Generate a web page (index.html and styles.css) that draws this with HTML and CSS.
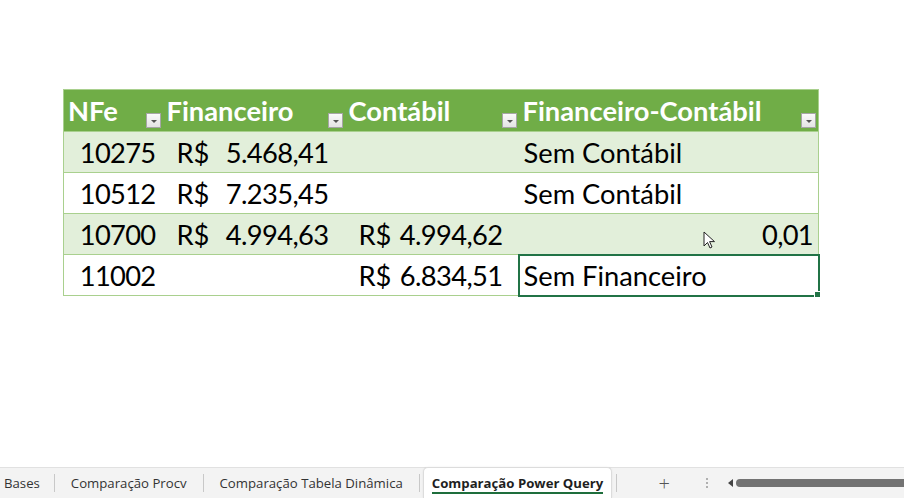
FILE: index.html
```html
<!DOCTYPE html>
<html lang="pt-BR">
<head>
<meta charset="utf-8">
<title>Comparação Power Query</title>
<link rel="stylesheet" href="styles.css">
</head>
<body>
<div class="sheet">
  <table class="xl-table">
    <colgroup>
      <col class="c-nfe">
      <col class="c-fin">
      <col class="c-cont">
      <col class="c-diff">
    </colgroup>
    <thead>
      <tr>
        <th><div class="hcell"><span>NFe</span><span class="filter"></span></div></th>
        <th><div class="hcell"><span>Financeiro</span><span class="filter"></span></div></th>
        <th><div class="hcell"><span>Contábil</span><span class="filter"></span></div></th>
        <th><div class="hcell"><span>Financeiro-Contábil</span><span class="filter"></span></div></th>
      </tr>
    </thead>
    <tbody>
      <tr class="band">
        <td class="num">10275</td>
        <td><div class="acc"><span>R$</span><span class="amt">5.468,41</span></div></td>
        <td></td>
        <td class="txt">Sem Contábil</td>
      </tr>
      <tr>
        <td class="num">10512</td>
        <td><div class="acc"><span>R$</span><span class="amt">7.235,45</span></div></td>
        <td></td>
        <td class="txt">Sem Contábil</td>
      </tr>
      <tr class="band">
        <td class="num">10700</td>
        <td><div class="acc"><span>R$</span><span class="amt">4.994,63</span></div></td>
        <td><div class="acc"><span>R$</span><span class="amt">4.994,62</span></div></td>
        <td class="num diff">0,01</td>
      </tr>
      <tr>
        <td class="num">11002</td>
        <td></td>
        <td><div class="acc"><span>R$</span><span class="amt">6.834,51</span></div></td>
        <td class="txt selected">Sem Financeiro</td>
      </tr>
    </tbody>
  </table>
  <svg class="cursor" width="13" height="19" viewBox="0 0 13 19">
    <path d="M1 1 L1 15 L4.5 11.5 L7 17 L9 16 L6.6 10.6 L11.5 10.6 Z" fill="#fff" stroke="#222" stroke-width="1"/>
  </svg>
</div>
<div class="tabbar">
  <div class="tab">Bases</div>
  <div class="sep"></div>
  <div class="tab">Comparação Procv</div>
  <div class="sep"></div>
  <div class="tab">Comparação Tabela Dinâmica</div>
  <div class="sep"></div>
  <div class="tab active"><span class="label">Comparação Power Query</span></div>
  <div class="sep"></div>
  <div class="add">+</div>
  <div class="dots"><span></span><span></span><span></span></div>
  <div class="scroll">
    <span class="arrow"></span>
    <span class="thumb"></span>
  </div>
</div>
</body>
</html>
```
FILE: styles.css
```css
html, body {
  margin: 0;
  padding: 0;
}
body {
  width: 904px;
  height: 498px;
  display: flex;
  flex-direction: column;
  background: #ffffff;
  overflow: hidden;
  font-family: Lato, "Liberation Sans", sans-serif;
}
.sheet {
  flex: 1;
  position: relative;
  padding: 89px 0 0 63px;
}
.xl-table {
  border-collapse: collapse;
  table-layout: fixed;
  width: 755px;
  border: 1px solid #a9d08e;
  font-size: 27.3px;
  color: #000;
}
.c-nfe { width: 99px; }
.c-fin { width: 182px; }
.c-cont { width: 174px; }
.c-diff { width: 300px; }
.xl-table th {
  background: #70ad47;
  color: #ffffff;
  font-weight: 700;
  height: 41px;
  padding: 0;
  text-align: left;
}
.hcell {
  display: flex;
  justify-content: space-between;
  align-items: center;
  height: 41px;
  padding: 0 2px 0 4px;
  box-sizing: border-box;
  position: relative;
}
.filter {
  align-self: flex-end;
  margin-bottom: 3px;
  width: 13px;
  height: 13px;
  border: 1px solid #a6a6a6;
  background: linear-gradient(#fafafa, #e4e4e4);
  position: relative;
  flex: none;
}
.filter::after {
  content: "";
  position: absolute;
  left: 4px;
  top: 6px;
  border-left: 3px solid transparent;
  border-right: 3px solid transparent;
  border-top: 3px solid #555;
}
.xl-table td {
  height: 40px;
  padding: 0;
  border-top: 1px solid #a9d08e;
  white-space: nowrap;
}
.band td {
  background: #e2efda;
}
.num {
  text-align: right;
  padding-right: 7px !important;
  letter-spacing: -0.7px;
}
.diff {
  padding-right: 5px !important;
}
.txt {
  padding-left: 5px !important;
}
.acc {
  display: flex;
  justify-content: space-between;
  padding: 0 16px 0 14px;
}
.amt {
  letter-spacing: -0.6px;
}
.selected {
  outline: 2px solid #217346;
  outline-offset: -1px;
  position: relative;
}
.selected::after {
  content: "";
  position: absolute;
  right: -3px;
  bottom: -3px;
  width: 5px;
  height: 5px;
  background: #217346;
  border: 1px solid #fff;
}
.cursor {
  position: absolute;
  left: 703px;
  top: 231px;
}
.tabbar {
  height: 30px;
  background: #f3f3f3;
  border-top: 1px solid #e1e1e1;
  display: flex;
  align-items: center;
  font-family: "Open Sans", "Noto Sans", sans-serif;
  font-size: 13.2px;
  color: #333;
  position: relative;
}
.tab {
  padding: 0 16px;
  white-space: nowrap;
}
.tab:first-child {
  padding-left: 4px;
  padding-right: 14px;
}
.sep {
  width: 1px;
  height: 18px;
  background: #c8c8c8;
}
.tab.active {
  align-self: stretch;
  background: #ffffff;
  margin-top: -1px;
  border: 1px solid #dcdcdc;
  border-bottom: none;
  border-radius: 5px 5px 0 0;
  box-shadow: 0 0 2px rgba(0,0,0,0.08);
  display: flex;
  align-items: center;
  padding: 0 8px;
  margin-left: 3px;
  margin-right: 4px;
  font-weight: 700;
  color: #1f1f1f;
}
.tab.active .label {
  border-bottom: 2px solid #1e6e3c;
  line-height: 18px;
  padding-top: 2px;
}
.add {
  margin-left: 39px;
  font-size: 20px;
  font-weight: 300;
  color: #555;
  width: 16px;
  text-align: center;
}
.dots {
  margin-left: 34px;
  display: flex;
  flex-direction: column;
  gap: 2px;
}
.dots span {
  width: 2px;
  height: 2px;
  background: #b0b0b0;
}
.scroll {
  margin-left: 20px;
  flex: 1;
  display: flex;
  align-items: center;
  gap: 3px;
}
.arrow {
  width: 0;
  height: 0;
  border-top: 4px solid transparent;
  border-bottom: 4px solid transparent;
  border-right: 5px solid #444;
}
.thumb {
  flex: 1;
  height: 8px;
  background: #737373;
  border-radius: 4px 0 0 4px;
}
```
